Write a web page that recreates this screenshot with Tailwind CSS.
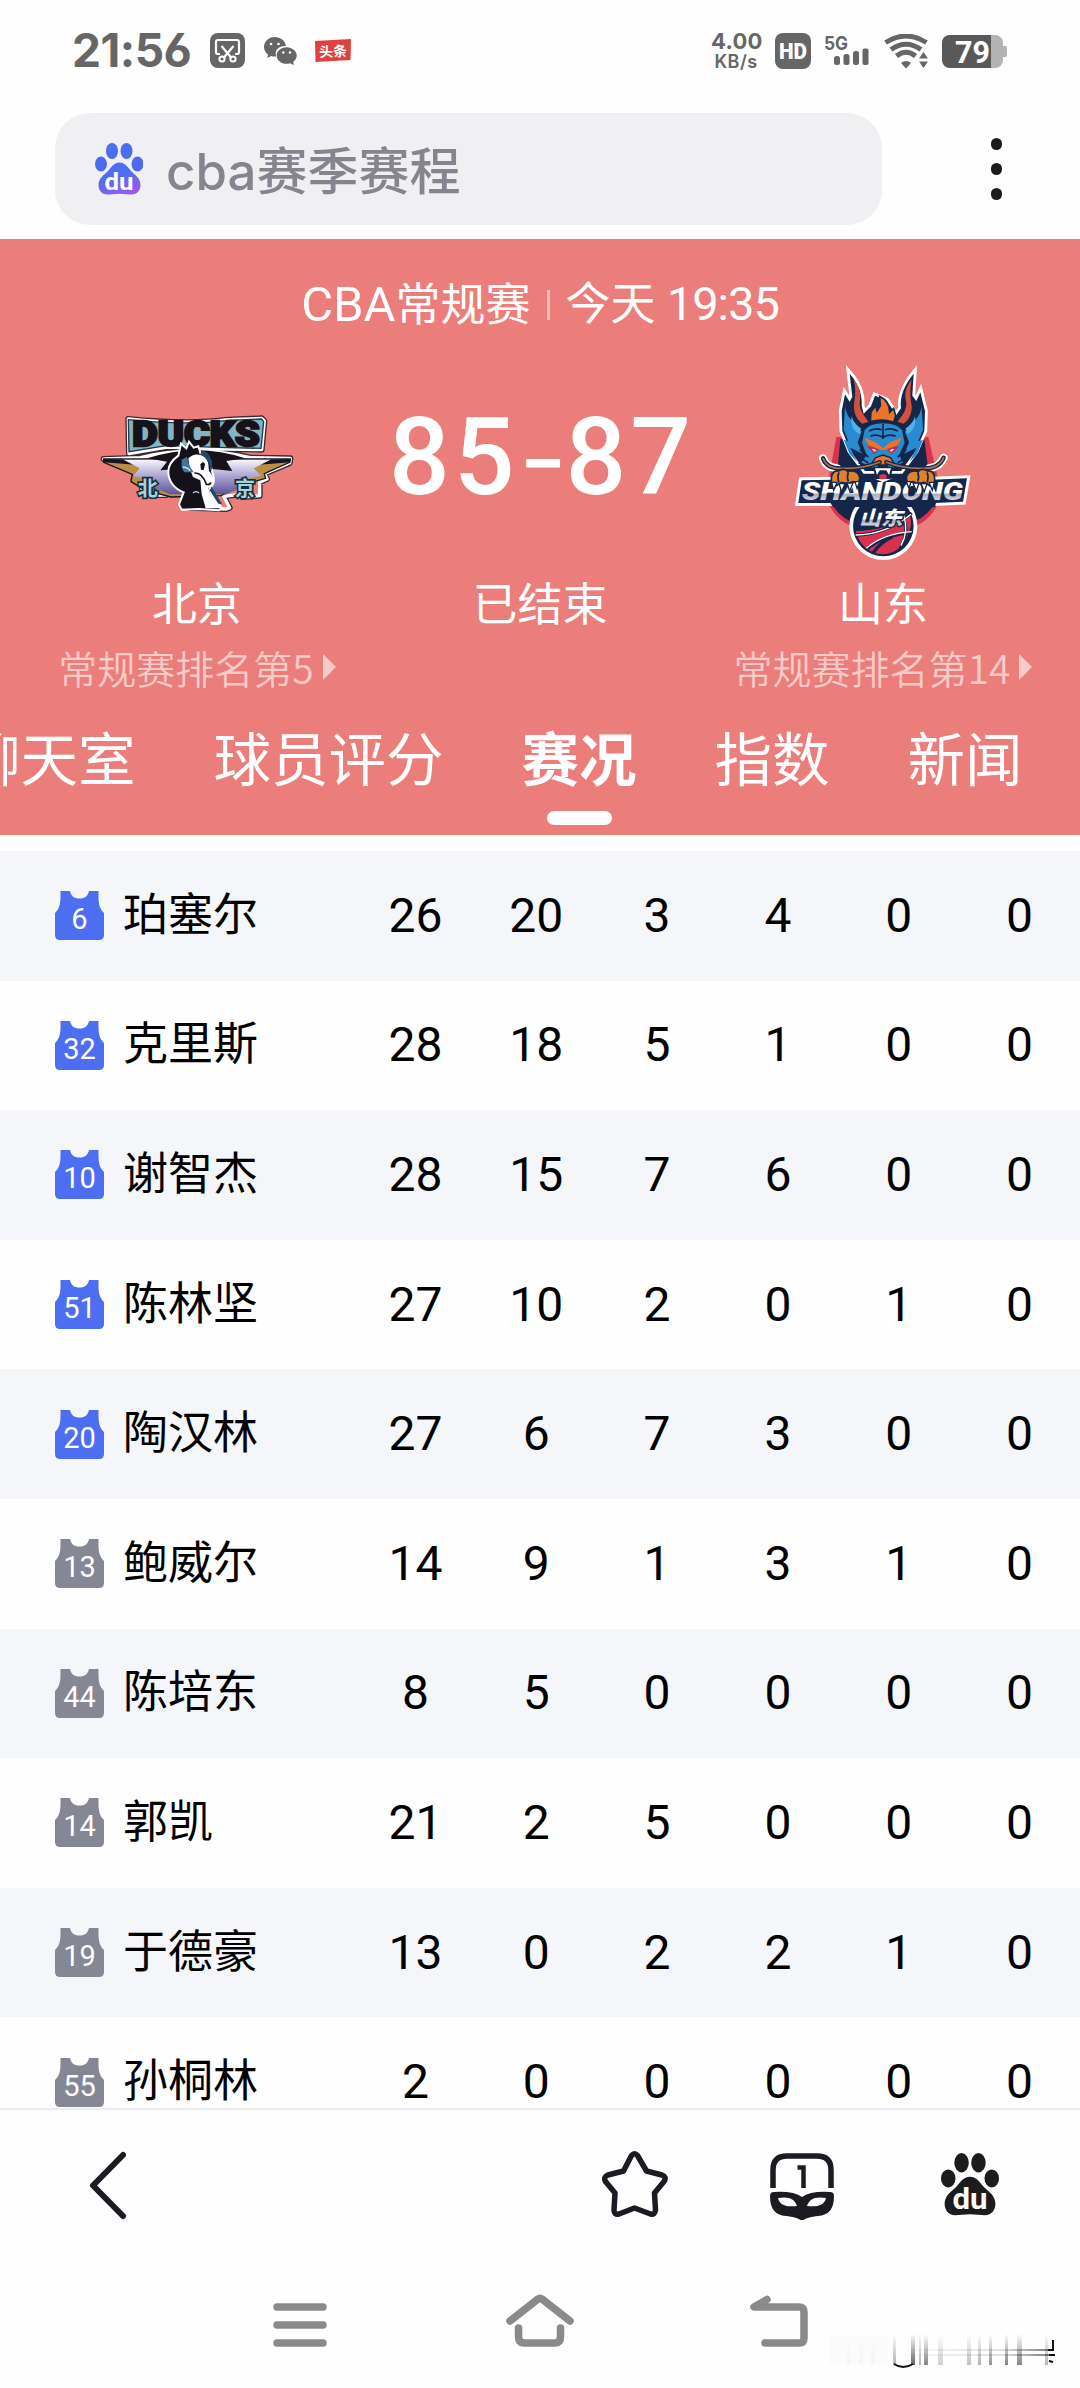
<!DOCTYPE html>
<html lang="zh-CN">
<head>
    <meta charset="UTF-8">
    <meta name="viewport" content="width=device-width, initial-scale=1.0">
    <title>cba赛季赛程</title>
    <script src="https://cdn.jsdelivr.net/npm/@tailwindcss/browser@4"></script>
</head>
<body class="bg-[#fefefe] h-[2388px] overflow-hidden flex flex-col font-['Roboto','Noto_Sans_CJK_SC',sans-serif]">
    <!-- status bar -->
    <div class="h-[113px] shrink-0 flex items-start pl-[72px] pr-[73px] text-[#666]">
        <div class="w-[138px] mt-[22px] h-[56px] leading-[56px] text-[46px] font-bold font-['Inter',sans-serif] tracking-[-0.5px] [font-feature-settings:'cv03','cv04'] whitespace-nowrap">21:56</div>
        <svg class="w-[35px] h-[35px] mt-[33px]" viewBox="0 0 35 35">
            <rect width="35" height="35" rx="8" fill="#666"></rect>
            <path d="M10 21H8a2 2 0 0 1-2-2V9a2 2 0 0 1 2-2h19a2 2 0 0 1 2 2v10a2 2 0 0 1-2 2h-2M11.500 13l10 12M23.500 13l-10 12" fill="none" stroke="#fff" stroke-width="2.200"></path>
            <circle cx="12" cy="26" r="2.600" fill="none" stroke="#fff" stroke-width="2"></circle>
            <circle cx="23" cy="26" r="2.600" fill="none" stroke="#fff" stroke-width="2"></circle>
        </svg>
        <svg class="w-[33px] h-[28px] ml-[19px] mt-[37px]" viewBox="0 0 33 28">
            <path d="M11 0C4.500 0 0 4.500 0 10c0 3.200 1.500 5.800 4 7.600L3.200 21l4-2c1.500.5 3 .6 5 .5C10 12 16 8.500 22 9 21 3.500 16.500 0 11 0z" fill="#666"></path>
            <path d="M22.500 10.200c-5.500 0-9.800 3.700-9.800 8.300s4.300 8.300 9.800 8.300c1.300 0 2.500-.2 3.500-.6l4 1.800-.8-3.300c2.300-1.500 3.500-3.800 3.500-6.200 0-4.600-4.700-8.300-10.200-8.300z" fill="#666"></path>
            <g fill="#fff"><circle cx="7" cy="7" r="1.300"></circle><circle cx="14.500" cy="7" r="1.300"></circle><circle cx="19.300" cy="15.500" r="1.200"></circle><circle cx="26" cy="15.500" r="1.200"></circle></g>
        </svg>
        <svg class="w-[36px] h-[24px] ml-[18px] mt-[39px]" viewBox="0 0 36 24">
            <path d="M0 2l36-2-.5 21L.5 23z" fill="#e0403f"></path>
            <text x="4" y="17.500" font-size="14" font-weight="700" fill="#fff" font-family="Noto Sans CJK SC" transform="rotate(-2 18 12)">头条</text>
        </svg>
        <div class="ml-auto mt-[30px] w-[50px] text-center font-bold font-['Inter',sans-serif]">
            <div class="text-[22px] leading-[22px] tracking-[0.3px]">4.00</div>
            <div class="text-[18px] leading-[19px] font-semibold tracking-[0.5px]">KB/s</div>
        </div>
        <svg class="w-[36px] h-[36px] ml-[14px] mt-[33px]" viewBox="0 0 36 36">
            <rect width="36" height="36" rx="8" fill="#666"></rect>
            <text x="4" y="26" font-size="22" font-weight="900" textLength="28" lengthAdjust="spacingAndGlyphs" fill="#fff" font-family="Roboto">HD</text>
        </svg>
        <svg class="w-[46px] h-[37px] ml-[13px] mt-[30px]" viewBox="0 -4 46 37" fill="#666">
            <text x="0" y="15.500" font-size="19" font-weight="700" textLength="24" lengthAdjust="spacingAndGlyphs" font-family="Inter">5G</text>
            <rect x="10" y="22" width="6" height="9" rx="2.500"></rect>
            <rect x="19.500" y="20" width="6" height="11" rx="2.500"></rect>
            <rect x="29" y="17" width="6" height="14" rx="2.500"></rect>
            <rect x="38.500" y="14.500" width="6" height="16.500" rx="2"></rect>
        </svg>
        <svg class="w-[45px] h-[35px] ml-[14px] mt-[34px]" viewBox="0 0 45 35" fill="none" stroke="#666" stroke-width="5">
            <path d="M1.500 8.500Q22 -4.500 42.500 8.500M7 15.500Q22 5 37 15.500M12.500 22Q22 14.500 31.500 22"></path>
            <path d="M17 29q5-4 10 0l-5 5.500z" fill="#666" stroke="none"></path>
            <path d="M35 24.500l4.500-6.500 4.500 6.500zM35 27.500l4.500 6.500 4.500-6.500z" fill="#666" stroke="none"></path>
        </svg>
        <svg class="w-[65px] h-[33px] ml-[13px] mt-[35px]" viewBox="0 0 65 33">
            <rect width="61" height="33" rx="8" fill="#b3b3b3"></rect>
            <rect x="59" y="11" width="6" height="11" rx="2" fill="#b3b3b3"></rect>
            <path d="M8 0h41v33H8a8 8 0 0 1-8-8V8a8 8 0 0 1 8-8z" fill="#595959"></path>
            <text x="13" y="27.500" font-size="31" font-weight="700" textLength="35" lengthAdjust="spacingAndGlyphs" fill="#fff" font-family="Roboto">79</text>
        </svg>
    </div>

    <!-- search bar -->
    <div class="h-[126px] shrink-0 flex items-start pl-[55px]">
        <div class="w-[827px] h-[112px] rounded-[35px] bg-[#f0f0f3] flex items-center pl-[40px]">
            <svg class="w-[48px] h-[52px]" viewBox="0 0 48 52">
                <defs><linearGradient id="paw" x1=".3" y1="0" x2=".7" y2="1"><stop offset=".4" stop-color="#4e6ef2"></stop><stop offset="1" stop-color="#9a5bea"></stop></linearGradient></defs>
                <g fill="#4a6cf0"><ellipse cx="17" cy="8" rx="6" ry="8"></ellipse><ellipse cx="31.500" cy="8" rx="6" ry="8"></ellipse><ellipse cx="6" cy="21" rx="6" ry="7.500"></ellipse><ellipse cx="42.500" cy="21" rx="6" ry="7.500"></ellipse></g>
                <path d="M24.500 19.500c5.500 0 8 4.500 11.500 8.500 4 4 9.500 7 9.500 14 0 5.500-3.500 9.500-8.500 9.500-4 0-8-.8-12.500-.8s-8.500.8-12.500.8c-5 0-8.500-4-8.500-9.500 0-7 5.500-10 9.500-14 3.500-4 6-8.500 11.500-8.500z" fill="url(#paw)"></path>
                <text x="9.500" y="46.500" font-size="24" font-weight="700" textLength="29" lengthAdjust="spacingAndGlyphs" fill="#fff" font-family="Roboto">du</text>
            </svg>
            <div class="ml-[23px] pt-[5px] text-[51px] leading-[60px] font-medium text-[#858590] font-['Inter','Noto_Sans_CJK_SC',sans-serif]">cba赛季赛程</div>
        </div>
        <div class="ml-[109px] mt-[25px] flex flex-col gap-[13px]">
            <span class="w-[11px] h-[12px] rounded-full bg-[#1c1c1f]"></span>
            <span class="w-[11px] h-[12px] rounded-full bg-[#1c1c1f]"></span>
            <span class="w-[11px] h-[12px] rounded-full bg-[#1c1c1f]"></span>
        </div>
    </div>

    <!-- match header -->
    <div class="h-[596px] shrink-0 bg-[#eb7e7a] text-white flex flex-col overflow-hidden">
        <div class="h-[124px] pt-[7px] flex items-center justify-center text-[45px]">
            <span><span class="text-[49px]">CBA</span>常规赛</span>
            <span class="w-[3px] h-[30px] bg-white/50 ml-[16px] mr-[16px]"></span>
            <span>今天 <span class="text-[47px] tracking-[-1px]">19:35</span></span>
        </div>
        <div class="h-[208px] flex">
            <div class="w-[394px] flex justify-center">
                <!-- Beijing Ducks -->
                <svg class="w-[200px] h-[100px] mt-[50px]" viewBox="110 100 600 300">
                    <defs><linearGradient id="wing" x1="0" y1="0" x2="0" y2="1"><stop offset="0" stop-color="#f8f6fc"></stop><stop offset=".5" stop-color="#a8a1cf"></stop><stop offset="1" stop-color="#5c549c"></stop></linearGradient></defs>
                    <!-- dark halo, then white outline -->
                    <path d="M204 118q180 18 300 2l100-4 8 8-8 86-104-2-180-6-114 20zM130 238l110-4q160-40 330 0l120 2-2 14-76 32 8 16-22 10v40l-50 4-8-8-50 6 18 34-10 4-110-4-10-8 8-30-62-10-6 10h-46l-26-12-4-26-22-10 8-20-88-40z" fill="#fff" stroke="#3c2630" stroke-width="18" stroke-linejoin="round"></path>
                    <path d="M204 118q180 18 300 2l100-4 8 8-8 86-104-2-180-6-114 20zM130 238l110-4q160-40 330 0l120 2-2 14-76 32 8 16-22 10v40l-50 4-8-8-50 6 18 34-10 4-110-4-10-8 8-30-62-10-6 10h-46l-26-12-4-26-22-10 8-20-88-40z" fill="#eb7e7a" stroke="#fff" stroke-width="10" stroke-linejoin="round"></path>
                    <!-- wings -->
                    <path d="M130 238h560l-2 10-76 34 4 14-64 18-70 34-150 4-76-20-44-26 4-22-86-36z" fill="#b98f45" stroke="#17131f" stroke-width="4"></path>
                    <path d="M130 238l110 6-6 12-104-8zM690 238l-110 6 6 12 104-8z" fill="#17131f"></path>
                    <path d="M190 240h440l-50 26 22 22-70 18 24 14-60 24H330l-50-20 18-16-80-18 20-24z" fill="url(#wing)"></path>
                    <path d="M262 236q148-48 292 0l-56 8 18 30-60-6h-96l-60 4 20-26z" fill="#17111a"></path>
                    <!-- wordmark -->
                    <path d="M204 120q180 18 300 2l100-4 6 8-8 80-104-2-180-6-112 18z" fill="#86b3c2" stroke="#1d3a4a" stroke-width="4"></path>
                    <text x="216" y="200" font-size="104" font-weight="900" textLength="382" lengthAdjust="spacingAndGlyphs" fill="#17121a" stroke="#17121a" stroke-width="7" font-family="Roboto">DUCKS</text>
                    <!-- duck -->
                    <path d="M354 228l8-36 16 14 8-20 14 18 14-4 6 20c24 8 34 22 32 42l8 32c2 16-4 26-12 28l4 20 32 42-8 8-60-4-52 2-8-16 14-36c-28-10-46-34-46-62 0-24 16-38 30-48z" fill="#15111a" stroke="#fff" stroke-width="6"></path>
                    <path d="M384 236q18-18 42-8 16 8 18 26l2 20c12 12 16 26 12 44l-14 6 6 20 34 42h-48l-12-42-4-42-22-10-10-26z" fill="#fff"></path>
                    <path d="M426 212q30 10 30 50l-4 14q-6-40-32-54zM454 322l32 52-12-2-26-40z" fill="#1d4a64"></path>
                    <path d="M364 240l16-8 6 24 14 22-28 0-8-14z" fill="#44769c"></path>
                    <path d="M368 262q16 2 22 12M398 340q10-8 18 0" fill="none" stroke="#cfe4ee" stroke-width="4"></path>
                    <path d="M420 254q10-12 14 0l-4 18-8-2z" fill="#15111a"></path>
                    <path d="M402 280q24-2 36 34 10 4 14-6" fill="none" stroke="#15111a" stroke-width="5"></path>
                    <g font-size="60" font-weight="700" fill="#a9d2dc" stroke="#14303c" stroke-width="10" paint-order="stroke" font-family="Noto Sans CJK SC"><text x="232" y="348">北</text><text x="524" y="348">京</text></g>
                </svg>
            </div>
            <div class="w-[292px] h-[162px] mt-[14px] flex items-center justify-center text-[107px] leading-[162px] font-medium tracking-[4px] whitespace-nowrap"><span>85</span><span class="font-['Inter',sans-serif] text-[106px] tracking-[-2px] font-normal">-</span><span class="-mr-[4px]">87</span></div>
            <div class="w-[394px] flex justify-center">
                <!-- Shandong -->
                <svg class="w-[180px] h-[200px]" viewBox="70 40 540 600">
                    <defs><linearGradient id="chrome" x1="0" y1="0" x2="0" y2="1"><stop offset=".55" stop-color="#fff"></stop><stop offset=".62" stop-color="#a9adba"></stop><stop offset="1" stop-color="#fff"></stop></linearGradient></defs>
                    <!-- shield -->
                    <path d="M200 262h276l30 130 0 68q-30 66-100 78H276q-70-12-100-78l0-68z" fill="#d8324f"></path>
                    <path d="M212 268h252l14 110 20 80q-30 50-80 62H260q-50-12-76-62l18-80z" fill="#152648"></path>
                    <!-- head silhouette with white outline -->
                    <path d="M240 72c30 34 38 66 36 96l6 24 22-22 12-32 34 14 18 26 6 26 20-28c-4-40 12-72 38-104l-4 66 12 16 12-26 14 56-2 60-26 60-44 60H286l-44-60-24-60-2-60 10-50 14 22 8-14z" fill="#14264a" stroke="#fff" stroke-width="17" stroke-linejoin="miter" paint-order="stroke"></path>
                    <!-- whisker outlines -->
                    <path d="M160 326q12 34 60 30 60 2 110-18M522 324q-14 34-60 32-60 2-112-18" fill="none" stroke="#fff" stroke-width="24" stroke-linecap="round" stroke-dasharray="55 400"></path>
                    <!-- ears and cheeks -->
                    <path d="M226 170c4 24 14 40 30 50l20 26-12 32 14 34-36-18 20 42-22-22-18-44 14 4-14-34z" fill="#2a8ad0"></path>
                    <path d="M456 170c-4 24-14 40-30 50l-20 26 12 32-14 34 36-18-20 42 22-22 18-44-14 4 14-34z" fill="#2a8ad0"></path>
                    <path d="M246 200c6 20 18 30 28 36l-4 18c-20-10-28-30-24-54zM436 200c-6 20-18 30-28 36l4 18c20-10 28-30 24-54z" fill="#54b0e8"></path>
                    <path d="M282 240q16-22 58-22t60 22l8 40-16 36 12 24-40 20-24-22-24 22-46-20 18-24-14-36z" fill="#2a8ad0" stroke="#14264a" stroke-width="6"></path>
                    <path d="M340 222v46M298 244q20-10 38-4M384 244q-20-10-38-4M302 260q20-8 36 2M378 260q-20-8-36 2" fill="none" stroke="#14264a" stroke-width="5"></path>
                    <path d="M270 300l26 22M262 318l34 22M410 300l-26 22M418 318l-34 22" stroke="#14264a" stroke-width="5"></path>
                    <!-- horns and flame -->
                    <path d="M252 90c20 24 22 46 18 70 0 24 12 36 26 56l-18 6c-22-16-28-42-24-66 4-24 4-44-2-66zM426 90c-20 24-22 46-16 70 0 24-12 36-26 56l18 6c22-16 28-42 22-66-4-24-2-44 2-66z" fill="#d5503a"></path>
                    <path d="M302 216l2-30 14-18 4 16 10-16-2-28c24 12 30 28 30 48l12-12 6 22-6 20q-34-12-70-2z" fill="#ec7429" stroke="#14264a" stroke-width="5"></path>
                    <!-- face -->
                    <path d="M284 264l34 14 22 18 22-18 34-14-14 26-26 8-16 4-16-4-26-8z" fill="#ec7429"></path>
                    <path d="M296 290l28 10-10 10zM384 290l-28 10 10 10z" fill="#fff" stroke="#c62c43" stroke-width="5"></path>
                    <path d="M318 324l22-8 22 8 10 14-22 8h-20l-22-8z" fill="#ec7429" stroke="#14264a" stroke-width="4"></path>
                    <path d="M310 352h60l-8 38-22 8-22-8z" fill="#14264a"></path>
                    <path d="M316 356l6 20 8-14h20l8 14 6-20z" fill="#fff"></path>
                    <path d="M328 378q12-10 24 0l-2 12h-20z" fill="#d8324f"></path>
                    <path d="M160 326q12 34 60 30 60 2 110-18M522 324q-14 34-60 32-60 2-112-18" fill="none" stroke="#14264a" stroke-width="13" stroke-linecap="round"></path>
                    <path d="M160 326q12 34 60 30 60 2 110-18M522 324q-14 34-60 32-60 2-112-18" fill="none" stroke="#b0714a" stroke-width="5" stroke-linecap="round"></path>
                    <!-- ball -->
                    <circle cx="341" cy="529" r="102" fill="#fff"></circle>
                    <circle cx="341" cy="529" r="91" fill="#14264a"></circle>
                    <path d="M258 544q40 0 88-12l60-28 14-14q8 30 0 50-20 70-80 74-64-4-82-70z" fill="#d8324f"></path>
                    <path d="M256 556q90 0 170-66M290 600q50-44 138-52M400 500q20 50-8 96M310 610q20-30 60-50" fill="none" stroke="#14264a" stroke-width="10"></path>
                    <path d="M258 556q90 0 166-62M290 596q50-44 136-50M402 496q16 50-8 92" fill="none" stroke="#fff" stroke-width="4"></path>
                    <!-- wordmark banner -->
                    <path d="M96 392l92-2 150 8 150-8 104-4-12 70-86 4H86z" fill="#14264a" stroke="#fff" stroke-width="18" paint-order="stroke"></path>
                    <path d="M190 376h100l50 22 52-22h98l8 24H184zM180 456h320l-4 16H190z" fill="#14264a"></path>
                    <text x="96" y="451" font-size="78" font-weight="900" font-style="italic" textLength="484" lengthAdjust="spacingAndGlyphs" fill="url(#chrome)" font-family="Roboto">SHANDONG</text>
                    <g fill="#e0812c" stroke="#14264a" stroke-width="5">
                        <path d="M186 400c-4-24 4-38 20-36 10-8 24-6 28 2 14-6 36 0 36 22l-4 12-16-4-16 6-18-4-16 10z"></path>
                        <path d="M494 400c4-24-4-38-20-36-10-8-24-6-28 2-14-6-36 0-36 22l4 12 16-4 16 6 18-4 16 10z"></path>
                        <path d="M208 368q-6 14 0 30M236 368q-6 14 0 28M472 368q6 14 0 30M444 368q6 14 0 28" fill="none"></path>
                    </g>
                    <path d="M186 398l6 24 10-24zM208 402l8 24 10-24zM232 400l8 24 10-24zM256 396l6 20 8-20zM494 398l-6 24-10-24zM472 402l-8 24-10-24zM448 400l-8 24-10-24zM424 396l-6 20-8-20z" fill="#fff" stroke="#14264a" stroke-width="4"></path>
                    <text x="268" y="526" font-size="58" font-weight="900" font-style="italic" textLength="130" lengthAdjust="spacingAndGlyphs" fill="url(#chrome)" stroke="#14264a" stroke-width="8" paint-order="stroke" font-family="Noto Sans CJK SC">山东</text>
                </svg>
            </div>
        </div>
        <div class="h-[64px] flex text-[45px] leading-[70px] text-center">
            <div class="w-[394px]">北京</div>
            <div class="w-[292px]">已结束</div>
            <div class="w-[394px]">山东</div>
        </div>
        <div class="h-[70px] flex justify-between text-[39px] leading-[62px] text-white/60 font-['Noto_Sans_CJK_SC',sans-serif] font-[350]">
            <div class="w-[394px] h-[66px] pb-[2px] flex justify-center items-center">常规赛排名第5<svg class="w-[13px] h-[26px] ml-[9px]" viewBox="0 0 13 26" fill="currentColor"><path d="M0 0l13 13L0 26z"></path></svg></div>
            <div class="w-[394px] h-[66px] pb-[2px] flex justify-center items-center">常规赛排名第14<svg class="w-[13px] h-[26px] ml-[9px]" viewBox="0 0 13 26" fill="currentColor"><path d="M0 0l13 13L0 26z"></path></svg></div>
        </div>
        <div class="h-[130px] flex gap-[78px] -ml-[37px] text-[57.5px] leading-[114px] whitespace-nowrap">
            <div>聊天室</div>
            <div>球员评分</div>
            <div class="font-bold flex flex-col items-center">赛况<span class="w-[65px] h-[14px] rounded-full bg-white -mt-[8px]"></span></div>
            <div>指数</div>
            <div>新闻</div>
        </div>
    </div>

    <!-- player stats -->
    <div id="players" class="h-[1273px] shrink-0 overflow-hidden pt-[16px] text-black"></div>

    <!-- browser toolbar -->
    <div class="h-[146px] shrink-0 border-t-2 border-[#ececee] flex items-start pt-[41px] pl-[89px]">
        <svg class="w-[38px] h-[70px]" viewBox="0 0 38 70" fill="none" stroke="#1c1b22" stroke-width="6" stroke-linecap="round" stroke-linejoin="round"><path d="M34 4L4 34.500 34 65"></path></svg>
        <svg class="w-[66px] h-[66px] ml-[475px]" viewBox="0 0 66 66" fill="none" stroke="#1c1b22" stroke-width="5.500" stroke-linejoin="round">
            <path d="M29.500 4.500q3-3.500 6 0L44.500 20 60 24q5 2 2 6.500L52.500 42 53.500 59q-.5 5-5 4L32.500 57 17 63q-5 1-5-4L13 42 3.500 30.500Q1 26 6 24L21.500 20z"></path>
        </svg>
        <svg class="w-[66px] h-[68px] ml-[101px] mt-[1px]" viewBox="0 0 66 68">
            <path d="M4 36V18Q4 4 18 4h30q14 0 14 14v18" fill="none" stroke="#1c1b22" stroke-width="5.500"></path>
            <path d="M28.500 15.500h6V36" fill="none" stroke="#1c1b22" stroke-width="4.500"></path>
            <path d="M1 44q0-4 4-4 20-1 28 5 8-6 28-5 4 0 4 4c0 13-5 19-16 20-8 1-12 2-16 5-4-3-8-4-16-5C6 63 1 57 1 44zM9 46c2 8 9 9 19 8-2-7-8-10-19-8zm48 0c-11-2-17 1-19 8 10 1 17 0 19-8z" fill="#1c1b22" fill-rule="evenodd"></path>
        </svg>
        <svg class="w-[58px] h-[63px] ml-[106px] mt-[2px]" viewBox="0 0 48 52">
            <g fill="#1c1b1d"><ellipse cx="17" cy="8" rx="6" ry="8"></ellipse><ellipse cx="31" cy="8" rx="6" ry="8"></ellipse><ellipse cx="6" cy="21" rx="6" ry="7.500"></ellipse><ellipse cx="42" cy="21" rx="6" ry="7.500"></ellipse>
            <path d="M24 19.500c5.500 0 8 4.500 11.500 8.500 4 4 9.500 7 9.500 14 0 5.500-3.500 9.500-8.500 9.500-4 0-8-.8-12.500-.8s-8.500.8-12.500.8c-5 0-8.500-4-8.500-9.500 0-7 5.500-10 9.500-14 3.500-4 6-8.500 11.500-8.500z"></path></g>
            <text x="9.500" y="46.500" font-size="24" font-weight="700" textLength="29" lengthAdjust="spacingAndGlyphs" fill="#fff" font-family="Roboto">du</text>
        </svg>
    </div>

    <!-- system navigation -->
    <div class="h-[134px] shrink-0 flex items-start pt-[39px] pl-[273px]">
        <svg class="w-[54px] h-[54px]" viewBox="0 0 54 54" fill="none" stroke="#8a8a8a" stroke-width="7.500" stroke-linecap="round"><path d="M4 14h46M4 32h46M4 50h46"></path></svg>
        <svg class="w-[70px] h-[56px] ml-[178px]" viewBox="0 0 70 56" fill="none" stroke="#8a8a8a" stroke-width="7.500" stroke-linecap="round" stroke-linejoin="round"><path d="M5 28L33 6q2-1.500 4 0l28 22M13.500 35v9q0 6 6 6h30q6 0 6-6v-9"></path></svg>
        <svg class="w-[60px] h-[56px] ml-[175px]" viewBox="0 0 60 56" fill="none" stroke="#8a8a8a" stroke-width="7.500" stroke-linecap="round" stroke-linejoin="round"><path d="M17 6.500L4 14h45q5 0 5 5v26q0 5-5 5H15"></path></svg>
        <!-- smeared corner mark -->
        <svg class="w-[236px] h-[44px] ml-[15px] mt-[33px]" viewBox="0 0 236 44">
            <defs>
                <linearGradient id="fade" x1="0" y1="0" x2="0" y2="1"><stop offset="0" stop-color="#000" stop-opacity="0"></stop><stop offset="1" stop-color="#000" stop-opacity=".6"></stop></linearGradient>
                <linearGradient id="streak" x1="0" y1="0" x2="1" y2="0"><stop offset="0" stop-color="#000" stop-opacity="0"></stop><stop offset=".7" stop-color="#000" stop-opacity=".12"></stop><stop offset="1" stop-color="#000" stop-opacity=".5"></stop></linearGradient>
            </defs>
            <rect x="4" y="10" width="60" height="28" fill="#000" opacity=".01"></rect>
            <g fill="url(#fade)">
                <rect x="22" y="8" width="3" height="31" opacity=".04"></rect><rect x="34" y="8" width="4" height="31" opacity=".04"></rect><rect x="46" y="8" width="4" height="31" opacity=".04"></rect>
                <rect x="68" y="8" width="3" height="31" opacity=".5"></rect><rect x="86" y="8" width="4" height="31"></rect>
                <rect x="94" y="8" width="2" height="31" opacity=".5"></rect><rect x="99" y="8" width="4" height="31" opacity=".8"></rect>
                <rect x="113" y="8" width="5" height="31" opacity=".3"></rect><rect x="142" y="8" width="4" height="31" opacity=".4"></rect>
                <rect x="153" y="8" width="3" height="31" opacity=".5"></rect><rect x="164" y="8" width="3" height="31" opacity=".7"></rect>
                <rect x="180" y="8" width="3" height="31" opacity=".8"></rect><rect x="192" y="8" width="5" height="31" opacity=".8"></rect>
                <rect x="220" y="8" width="3" height="31" opacity=".5"></rect>
            </g>
            <rect x="70" y="23" width="154" height="2" fill="url(#streak)"></rect><rect x="70" y="28" width="154" height="2" fill="url(#streak)"></rect>
            <path d="M69 38q9 6 19 0M228 14v10h-5M224 29h6M224 35l4 1" fill="none" stroke="#111" stroke-width="2"></path>
        </svg>
    </div>

    <script>
        const players = [
            [6, '珀塞尔', [26, 20, 3, 4, 0, 0], true],
            [32, '克里斯', [28, 18, 5, 1, 0, 0], true],
            [10, '谢智杰', [28, 15, 7, 6, 0, 0], true],
            [51, '陈林坚', [27, 10, 2, 0, 1, 0], true],
            [20, '陶汉林', [27, 6, 7, 3, 0, 0], true],
            [13, '鲍威尔', [14, 9, 1, 3, 1, 0], false],
            [44, '陈培东', [8, 5, 0, 0, 0, 0], false],
            [14, '郭凯', [21, 2, 5, 0, 0, 0], false],
            [19, '于德豪', [13, 0, 2, 2, 1, 0], false],
            [55, '孙桐林', [2, 0, 0, 0, 0, 0], false],
        ];

        document.getElementById('players').innerHTML = players.map(([number, name, stats, starter]) => `
            <div class="h-[129.6px] flex items-center pl-[55px] odd:bg-[#f4f6fa]">
                <svg class="w-[49px] h-[49px] ${starter ? 'text-[#4e6ef2]' : 'text-[#858894]'}" viewBox="0 0 49 49">
                    <path d="M5.500 0H15c1 5 4 7.500 9.500 7.500S33 5 34 0h9.500v5c0 9 1.500 13 5.500 17v22q0 5-5 5H5q-5 0-5-5V22c4-4 5.500-8 5.500-17z" fill="currentColor"></path>
                    <text x="24.500" y="38" font-size="29" text-anchor="middle" fill="#fff" font-family="Roboto">${number}</text>
                </svg>
                <div class="ml-[19px] text-[45px] leading-[60px]">${name}</div>
                <div class="ml-auto w-[725px] grid grid-cols-6 text-center text-[48px] leading-[56px]">
                    ${stats.map(value => `<span>${value}</span>`).join('')}
                </div>
            </div>
        `).join('');
    </script>
</body>
</html>
